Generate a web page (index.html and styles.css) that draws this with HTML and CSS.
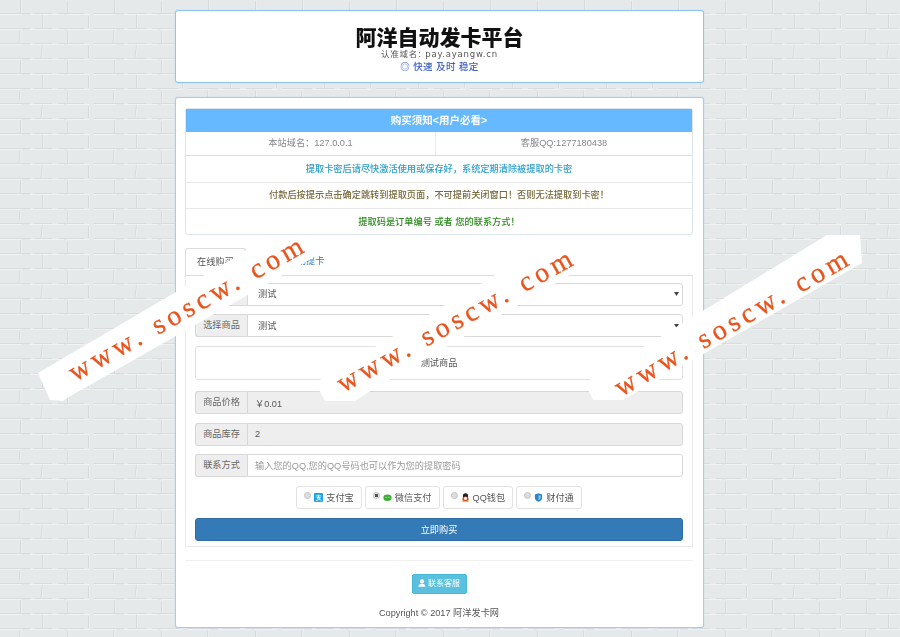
FILE: index.html
```html
<!DOCTYPE html>
<html lang="zh-CN">
<head>
    <meta charset="UTF-8">
    <meta name="viewport" content="width=device-width, initial-scale=1.0">
    <title>阿洋自动发卡平台</title>
    <link rel="stylesheet" href="styles.css">
</head>
<body>
    <div class="wrap">
        <!-- Logo section -->
        <div class="panel logo">
            <div class="logo-title">阿洋自动发卡平台</div>
            <div class="logo-domain">认准域名: pay.ayangw.cn</div>
            <div class="logo-slogan">◎ 快速 及时 稳定</div>
        </div>

        <div class="panel main">
            <!-- Notice section -->
            <div class="notice">
                <div class="notice-head">购买须知&lt;用户必看&gt;</div>
                <div class="notice-info">
                    <div>本站域名：127.0.0.1</div>
                    <div>客服QQ:1277180438</div>
                </div>
                <div class="notice-row info">提取卡密后请尽快激活使用或保存好，系统定期清除被提取的卡密</div>
                <div class="notice-row warning">付款后按提示点击确定跳转到提取页面，不可提前关闭窗口！否则无法提取到卡密！</div>
                <div class="notice-row success">提取码是订单编号 或者 您的联系方式！</div>
            </div>

            <!-- Tabs section -->
            <div class="tabs">
                <div class="tab active">在线购买</div>
                <div class="tab">自助提卡</div>
            </div>

            <div class="tab-body">
                <div class="group">
                    <label class="addon">选择分类</label>
                    <select class="field"><option>测试</option></select>
                </div>
                <div class="group">
                    <label class="addon">选择商品</label>
                    <select class="field"><option>测试</option></select>
                </div>
                <div class="goods-desc">测试商品</div>
                <div class="group">
                    <label class="addon">商品价格</label>
                    <input class="field" type="text" value="￥0.01" readonly>
                </div>
                <div class="group">
                    <label class="addon">商品库存</label>
                    <input class="field" type="text" value="2" readonly>
                </div>
                <div class="group">
                    <label class="addon">联系方式</label>
                    <input class="field" type="text" placeholder="输入您的QQ,您的QQ号码也可以作为您的提取密码">
                </div>

                <!-- Payment section -->
                <div class="pay">
                    <label class="pay-item">
                        <input type="radio" name="pay">
                        <svg class="pay-icon" viewBox="0 0 10 10"><rect width="10" height="10" rx="1" fill="#1ba5ee"/><path d="M2 3.2h6M5 1.8v3M3 5h4C6.4 7 4.6 8 2.2 8.4M3.6 6c1.4.6 3 1.4 4.6 2.3" fill="none" stroke="#fff" stroke-width=".9"/></svg>
                        支付宝
                    </label>
                    <label class="pay-item">
                        <input type="radio" name="pay" checked>
                        <svg class="pay-icon" viewBox="0 0 10 10"><ellipse cx="5" cy="5.4" rx="4.6" ry="3.6" fill="#3cb034"/><circle cx="3.4" cy="4.8" r=".6" fill="#fff"/><circle cx="6.6" cy="4.8" r=".6" fill="#fff"/></svg>
                        微信支付
                    </label>
                    <label class="pay-item">
                        <input type="radio" name="pay">
                        <svg class="pay-icon" viewBox="0 0 10 10"><ellipse cx="5" cy="3.4" rx="2.9" ry="3.2" fill="#222"/><ellipse cx="5" cy="6.6" rx="3.4" ry="2.8" fill="#d8352a"/><ellipse cx="5" cy="6" rx="1.8" ry="1.8" fill="#f4efe6"/><ellipse cx="2.8" cy="9" rx="1.6" ry=".9" fill="#e8a020"/><ellipse cx="7.2" cy="9" rx="1.6" ry=".9" fill="#e8a020"/></svg>
                        QQ钱包
                    </label>
                    <label class="pay-item">
                        <input type="radio" name="pay">
                        <svg class="pay-icon" viewBox="0 0 10 10"><path d="M5 .4 9 1.8v3.4C9 7.4 7.2 9 5 9.8 2.8 9 1 7.4 1 5.2V1.8z" fill="#2a86c8"/><path d="M5 2.2 7.4 3v2.2C7.4 6.4 6.3 7.4 5 8z" fill="#8cc8ee"/></svg>
                        财付通
                    </label>
                </div>

                <button class="buy" type="button">立即购买</button>
            </div>

            <hr class="line">

            <!-- Footer section -->
            <div class="foot">
                <button class="kefu" type="button">
                    <svg class="kefu-icon" viewBox="0 0 10 10"><circle cx="5" cy="3" r="2.6" fill="#fff"/><path d="M.6 9.6C.8 7 2.6 6 5 6s4.2 1 4.4 3.6z" fill="#fff"/></svg>
                    联系客服
                </button>
                <div class="copy">Copyright © 2017 阿洋发卡网</div>
            </div>
        </div>
    </div>

    <!-- Watermark bands over the page -->
    <svg class="stamp" viewBox="0 0 900 637">
        <polygon points="38,373 273,235 315,235 323,252 67,398 63,401 50,400" fill="#fff"/>
        <polygon points="315,383 562,235 592,235 592,262 367,393 355,401 325,401" fill="#fff"/>
        <polygon points="585,383 827,235 860,235 862,263 623,400 593,400" fill="#fff"/>
        <text class="stamp-text" transform="translate(75,382) rotate(-29.5)">www. soscw. com</text>
        <text class="stamp-text" transform="translate(343,393) rotate(-29)">www. soscw. com</text>
        <text class="stamp-text" transform="translate(621,397) rotate(-30)">www. soscw. com</text>
    </svg>
</body>
</html>
```
FILE: styles.css
```css
html, body {
    height: 100%;
}

body {
    margin: 0;
    overflow: hidden;
    position: relative;
    font-family: "Liberation Sans", "Noto Sans CJK SC", sans-serif;
    font-size: 9.2px;
    color: #333;
    background-color: #e6e9e9;
    /* brick wall tile, 4 courses of 15px */
    background-image: url("data:image/svg+xml,%3Csvg xmlns='http://www.w3.org/2000/svg' width='94' height='60'%3E%3Cg fill='none' stroke-width='1'%3E%3Cpath d='M0 13.5H94M0 28.5H94M0 43.5H94M0 58.5H94' stroke='%23d9dcdc' stroke-dasharray='30 4 18 6 26 10'/%3E%3Cpath d='M0 14.5H94M0 29.5H94M0 44.5H94M0 59.5H94' stroke='%23f1f3f3' stroke-dasharray='22 8 34 3'/%3E%3Cpath d='M20.5 0V13M67.5 1V13M42.5 15V28M88.5 16V28M20 30 19 43M67.5 31V43M42.5 45 41 58M88.5 46V58' stroke='%23d6dada'/%3E%3Cpath d='M21.5 0V13M68.5 1V13M43.5 15V28M89.5 16V28M21 30 20 43M68.5 31V43M43.5 45 42 58M89.5 46V58' stroke='%23eceeee'/%3E%3C/g%3E%3C/svg%3E");
}

.wrap {
    width: 529px;
    margin-left: 175px;
    padding-top: 10px;
    filter: blur(0.45px);
}

.panel {
    box-sizing: border-box;
    background-color: #fff;
    border: 1px solid #8cc4f2;
    border-radius: 3px;
    box-shadow: 0 0 1px #8cc4f2;
}

/* Logo */
.logo {
    height: 73px;
    margin-bottom: 14px;
    padding-top: 14px;
    text-align: center;
}

.logo-title {
    font-family: "Noto Sans CJK SC", sans-serif;
    font-size: 21px;
    font-weight: 900;
    line-height: 22px;
    color: #111;
}

.logo-domain {
    margin-top: 2px;
    font-family: "DejaVu Sans", "Noto Sans CJK SC", sans-serif;
    font-size: 8.5px;
    line-height: 11px;
    letter-spacing: 0.8px;
    color: #555;
}

.logo-slogan {
    margin-top: 1px;
    font-size: 9.5px;
    font-weight: 500;
    line-height: 12px;
    letter-spacing: 0.4px;
    color: #3f62c4;
}

/* Main panel */
.main {
    height: 531px;
    padding: 10px 10px 0 9px;
    border-color: #a9cbe8;
}

.notice {
    height: 127px;
    box-sizing: border-box;
    border: 1px solid #dde5ea;
    border-radius: 3px;
    text-align: center;
}

.notice-head {
    height: 23px;
    line-height: 23px;
    background-color: #66b8ff;
    color: #fff;
    font-size: 10.5px;
    font-weight: bold;
}

.notice-info {
    display: flex;
    height: 23px;
    line-height: 23px;
    color: #888;
    border-bottom: 1px solid #ddd;
}

.notice-info div {
    flex: 1;
}

.notice-info div:first-child {
    flex: none;
    width: 249px;
    border-right: 1px solid #eee;
}

.notice-row {
    height: 26px;
    line-height: 26px;
    border-bottom: 1px solid #e8e8e8;
    font-weight: 500;
}

.notice-row.warning {
    height: 25px;
    line-height: 25px;
}

.notice-row:last-child {
    border-bottom: none;
}

.info {
    color: #2c9fcb;
}

.warning {
    color: #76693c;
}

.success {
    color: #2b8a1e;
}

/* Tabs */
.tabs {
    display: flex;
    height: 27px;
    margin-top: 13px;
}

.tab {
    padding: 0 11px;
    line-height: 27px;
    color: #337ab7;
    margin-left: 31px;
}

.tab.active {
    margin-left: 0;
    color: #555;
    background-color: #fff;
    border: 1px solid #ddd;
    border-bottom: none;
    border-radius: 3px 3px 0 0;
    box-sizing: border-box;
}

.tab-body {
    height: 272px;
    box-sizing: border-box;
    padding: 6.5px 9px 0;
    border: 1px solid #eaeaea;
    border-top: 1px solid #ddd;
}

.group {
    display: flex;
    height: 23px;
    margin-bottom: 8.5px;
}

.addon {
    flex: none;
    box-sizing: border-box;
    width: 52px;
    line-height: 21px;
    text-align: center;
    color: #666;
    background-color: #eee;
    border: 1px solid #d8d8d8;
    border-right: none;
    border-radius: 3px 0 0 3px;
}

.field {
    flex: 1;
    min-width: 0;
    box-sizing: border-box;
    height: 23px;
    padding: 0 10px 0 7px;
    font-family: inherit;
    font-size: 9.2px;
    color: #555;
    background-color: #fff;
    border: 1px solid #d8d8d8;
    border-radius: 0 3px 3px 0;
    outline: none;
}

select.field {
    appearance: none;
    padding-left: 10px;
    /* small caret */
    background-image: url("data:image/svg+xml,%3Csvg xmlns='http://www.w3.org/2000/svg' width='5' height='4'%3E%3Cpath d='M0 0H5L2.5 4z' fill='%23444'/%3E%3C/svg%3E");
    background-position: right 3px center;
    background-repeat: no-repeat;
}

.field[readonly] {
    background-color: #eee;
}

.field::placeholder {
    color: #999;
}

.goods-desc {
    box-sizing: border-box;
    height: 34px;
    margin-bottom: 11.5px;
    line-height: 32px;
    text-align: center;
    color: #555;
    border: 1px solid #e2e2e2;
    border-radius: 3px;
}

.pay {
    display: flex;
    justify-content: center;
    gap: 3px;
    height: 23px;
    margin-bottom: 9.5px;
}

.pay-item {
    display: flex;
    align-items: center;
    box-sizing: border-box;
    padding: 0 7px;
    font-size: 9.2px;
    color: #555;
    background-color: #fff;
    border: 1px solid #e2e2e2;
    border-radius: 3px;
}

.pay-item input {
    appearance: none;
    width: 7px;
    height: 7px;
    margin: 0 3px 4px 0;
    border-radius: 50%;
    background-color: #ddd;
    border: 1px solid #c4c4c4;
}

.pay-item input:checked {
    background-image: radial-gradient(circle, #555 45%, #ddd 50%);
}

.pay-icon {
    width: 9px;
    height: 9px;
    margin-right: 3px;
}

.buy {
    display: block;
    width: 100%;
    height: 23px;
    padding: 0 0 2px;
    font-family: inherit;
    font-size: 9.2px;
    color: #fff;
    background-color: #337ab7;
    border: 1px solid #2e6da4;
    border-radius: 3px;
}

.line {
    height: 0;
    margin: 13px 0 13px;
    border: none;
    border-top: 1px solid #f0f0f0;
}

.foot {
    text-align: center;
}

.kefu {
    width: 55px;
    height: 20px;
    padding: 0 0 3px;
    font-family: inherit;
    font-size: 8px;
    color: #fff;
    background-color: #5bc0de;
    border: 1px solid #46b8da;
    border-radius: 2px;
}

.kefu-icon {
    width: 8px;
    height: 8px;
    vertical-align: -1px;
}

.copy {
    margin-top: 13px;
    line-height: 12px;
    color: #555;
}

/* Watermark */
.stamp {
    position: absolute;
    top: 0;
    left: 0;
    width: 900px;
    height: 637px;
}

.stamp-text {
    font-family: "Liberation Serif", serif;
    font-size: 28px;
    letter-spacing: 4.5px;
    fill: #e9531c;
    stroke: #e9531c;
    stroke-width: 0.3px;
}
```
